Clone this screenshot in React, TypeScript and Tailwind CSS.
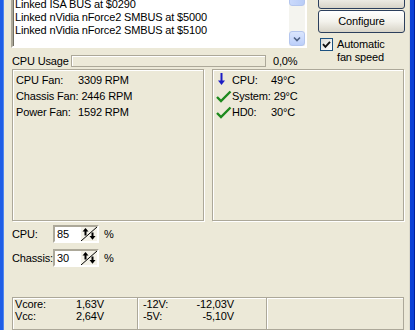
import React from 'react'

const listLines = [
  'Linked ISA BUS at $0290',
  'Linked nVidia nForce2 SMBUS at $5000',
  'Linked nVidia nForce2 SMBUS at $5100',
]

const fans = [
  { label: 'CPU Fan:', value: '3309 RPM' },
  { label: 'Chassis Fan:', value: '2446 RPM' },
  { label: 'Power Fan:', value: '1592 RPM' },
]

const temps = [
  { label: 'CPU:', value: '49°C', state: 'down' },
  { label: 'System:', value: '29°C', state: 'ok' },
  { label: 'HD0:', value: '30°C', state: 'ok' },
]

const volts = [
  { a: 'Vcore:', av: '1,63V', b: '-12V:', bv: '-12,03V' },
  { a: 'Vcc:', av: '2,64V', b: '-5V:', bv: '-5,10V' },
]

const speeds = [
  { label: 'CPU:', value: '85' },
  { label: 'Chassis:', value: '30' },
]

function TempIcon({ state }: { state: string }) {
  if (state === 'down') {
    return (
      <svg width="16" height="16" viewBox="0 0 16 16">
        <rect x="4.5" y="1" width="2" height="9" fill="#1c1cc4" />
        <polygon points="2,8.5 9,8.5 5.5,13" fill="#1c1cc4" />
      </svg>
    )
  }
  return (
    <svg width="16" height="16" viewBox="0 0 16 16">
      <path d="M1 9 L5 13 L14.5 3.5" fill="none" stroke="#1d8a1d" strokeWidth="2.4" />
    </svg>
  )
}

function SpinIcon() {
  return (
    <svg width="16" height="14" viewBox="0 0 16 14">
      <rect x="0" y="0" width="16" height="14" fill="#f4f2e8" />
      <line x1="0" y1="14" x2="16" y2="0" stroke="#000" strokeWidth="1" />
      <polygon points="1.5,4.5 7.5,4.5 4.5,1" fill="#000" />
      <rect x="3.5" y="4" width="2" height="4.5" fill="#000" />
      <polygon points="8.5,9 14.5,9 11.5,12.8" fill="#000" />
      <rect x="10.5" y="5.5" width="2" height="4" fill="#000" />
    </svg>
  )
}

function XpButton({ children, className }: any) {
  return (
    <div
      className={
        'h-[23px] rounded-[3px] border border-[#2c3f5c] bg-gradient-to-b from-white via-[#f3f2ec] to-[#d8d4c8] flex items-center justify-center ' +
        className
      }
    >
      {children}
    </div>
  )
}

export default function App() {
  return (
    <div className="w-[415px] h-[330px] overflow-hidden flex bg-[#ece9d8] text-black text-[11px] leading-[13px] tracking-[-0.15px] font-['Liberation_Sans',Arial,sans-serif]">
      {/* window frame left */}
      <div className="w-[4px] shrink-0 flex">
        <div className="w-[3px] bg-[#1f5ee6]" />
        <div className="w-[1px] bg-[#4f86f0]" />
      </div>

      <div className="flex-1 flex flex-col pl-[7px] pr-[4px]">
        {/* top section */}
        <div className="flex gap-[11px]">
          <div className="w-[296px] flex flex-col">
            <div className="h-[60px] mt-[-12px] flex border-2 border-t-[#aca899] border-l-[#aca899] border-r-white border-b-white shadow-[inset_1px_1px_0_#716f64] bg-white">
              <div className="flex-1 pt-[8px] pl-[2px]">
                {listLines.map((l, i) => (
                  <div key={i} className="whitespace-nowrap">{l}</div>
                ))}
              </div>
              <div className="w-[16px] flex flex-col bg-[#f4f4ef]">
                <div className="h-[16px] rounded-b-[3px] border border-[#b4c6ee] bg-gradient-to-r from-[#cad9fb] to-[#b9cdf7]" />
                <div className="flex-1" />
                <div className="h-[15px] rounded-[3px] border border-[#b4c6ee] bg-gradient-to-b from-[#dbe6fd] to-[#bccffa] flex items-center justify-center">
                  <svg width="8" height="6" viewBox="0 0 8 6">
                    <path d="M1 1.5 L4 4.5 L7 1.5" fill="none" stroke="#4d6185" strokeWidth="1.6" />
                  </svg>
                </div>
              </div>
            </div>
            <div className="mt-[7px] h-[12px] flex items-center pl-[1px]">
              <span className="w-[59px] whitespace-nowrap">CPU Usage</span>
              <div className="w-[195px] h-[12px] border border-[#aca899] shadow-[inset_1px_1px_0_#fff]" />
              <span className="ml-[7px]">0,0%</span>
            </div>
          </div>

          <div className="w-[87px] flex flex-col">
            <XpButton className="mt-[-14px]" />
            <XpButton className="mt-[1px]">Configure</XpButton>
            <div className="mt-[5px] ml-[2px] flex items-start gap-[4px]">
              <div className="w-[13px] h-[13px] border border-[#1c5180] bg-gradient-to-br from-[#dcdcd7] to-white flex items-center justify-center">
                <svg width="9" height="9" viewBox="0 0 9 9">
                  <path d="M1 4.2 L3.4 6.8 L8 1.8" fill="none" stroke="#111" strokeWidth="1.9" />
                </svg>
              </div>
              <div>
                <div>Automatic</div>
                <div>fan speed</div>
              </div>
            </div>
          </div>
        </div>

        {/* fans and temperatures */}
        <div className="mt-[2px] flex gap-[8px] pl-[1px]">
          <div className="w-[192px] h-[152px] border border-[#aca899] shadow-[inset_1px_1px_0_#fff,1px_1px_0_#fff] pt-[2px] pl-[3px] leading-[16px]">
            {fans.map((f, i) => (
              <div key={i} className="flex whitespace-nowrap">
                <span className="min-w-[62px] pr-[3px]">{f.label}</span>
                <span>{f.value}</span>
              </div>
            ))}
          </div>
          <div className="w-[192px] h-[152px] border border-[#aca899] shadow-[inset_1px_1px_0_#fff,1px_1px_0_#fff] pt-[2px] pl-[3px] leading-[16px]">
            {temps.map((t, i) => (
              <div key={i} className="flex items-center whitespace-nowrap">
                <span className="w-[16px] h-[16px] shrink-0">
                  <TempIcon state={t.state} />
                </span>
                <span className="min-w-[39px] pr-[3px]">{t.label}</span>
                <span>{t.value}</span>
              </div>
            ))}
          </div>
        </div>

        {/* fan speed spinners */}
        <div className="mt-[4px] flex flex-col gap-[6px] pl-[1px]">
          {speeds.map((s, i) => (
            <div key={i} className="h-[18px] flex items-center">
              <span className="w-[41px]">{s.label}</span>
              <div className="w-[46px] h-[18px] flex border-2 border-t-[#aca899] border-l-[#aca899] border-r-white border-b-white shadow-[inset_1px_1px_0_#716f64]">
                <div className="w-[26px] bg-white pl-[2px] pt-[1px]">{s.value}</div>
                <SpinIcon />
              </div>
              <span className="ml-[5px]">%</span>
            </div>
          ))}
        </div>

        {/* voltages */}
        <div className="mt-[30px] ml-[1px] w-[392px] h-[40px] flex border border-[#aca899] shadow-[inset_1px_1px_0_#fff] leading-[12px]">
          <div className="w-[125px] border-r border-[#aca899] pl-[2px]">
            {volts.map((v, i) => (
              <div key={i} className="flex">
                <span className="w-[61px]">{v.a}</span>
                <span>{v.av}</span>
              </div>
            ))}
          </div>
          <div className="w-[129px] border-r border-[#aca899] shadow-[inset_1px_0_0_#fff] pl-[5px] pr-[32px]">
            {volts.map((v, i) => (
              <div key={i} className="flex justify-between">
                <span>{v.b}</span>
                <span>{v.bv}</span>
              </div>
            ))}
          </div>
          <div className="flex-1 shadow-[inset_1px_0_0_#fff]" />
        </div>
      </div>

      {/* window frame right */}
      <div className="w-[6px] shrink-0 flex">
        <div className="w-[1px] bg-[#dcd9cb]" />
        <div className="w-[4px] bg-[#0b3fd6]" />
        <div className="w-[1px] bg-[#00209c]" />
      </div>
    </div>
  )
}
